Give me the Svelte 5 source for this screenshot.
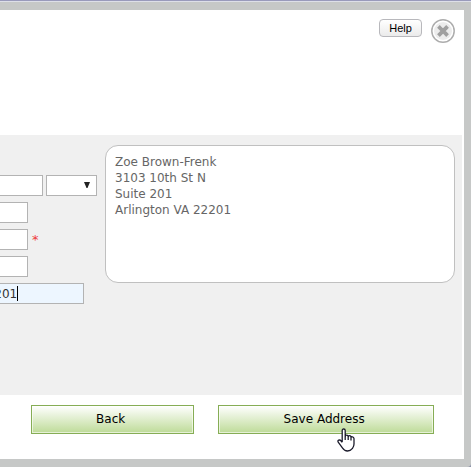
<script lang="ts">
	interface Line {
		id: string;
		label: string;
		value: string;
		required?: boolean;
		active?: boolean;
	}

	const lines: Line[] = [
		{ id: 'phone', label: 'Phone', value: '' },
		{ id: 'street', label: 'Street', value: '', required: true },
		{ id: 'suite', label: 'Suite', value: '' },
		{ id: 'zip', label: 'ZIP code', value: '22201', active: true }
	];

	const preview = ['Zoe Brown-Frenk', '3103 10th St N', 'Suite 201', 'Arlington VA 22201'];
</script>

<div class="frame">
	<main class="dialog">
		<header>
			<button type="button" class="help">Help</button>
			<button type="button" class="close" aria-label="Close">
				<svg width="24" height="24" viewBox="0 0 24 24" fill="none">
					<circle cx="12" cy="12" r="11.2" fill="#fff" stroke="#adadad" stroke-width="1.5" />
					<circle cx="12" cy="12" r="9" fill="#ececec" />
					<path d="M8.8 8.8l6.4 6.4M15.2 8.8l-6.4 6.4" stroke="#a0a0a0" stroke-width="3.8" stroke-linecap="square" />
				</svg>
			</button>
		</header>

		<section class="content">
			<div class="fields">
				<div class="line">
					<input class="name" type="text" aria-label="Name" />
					<div class="select">
						<select aria-label="Suffix">
							<option></option>
						</select>
						<svg width="6" height="6" viewBox="0 0 6 6"><path d="M0 0h6L3.5 6h-1z" fill="#222" /></svg>
					</div>
				</div>
				{#each lines as line}
					<div class="line">
						<input type="text" id={line.id} aria-label={line.label} class:active={line.active} value={line.value} />
						{#if line.active}
							<span class="caret"></span>
						{/if}
						{#if line.required}
							<span class="required">*</span>
						{/if}
					</div>
				{/each}
			</div>
			<address>
				{#each preview as row}
					<div>{row}</div>
				{/each}
			</address>
		</section>

		<footer>
			<button type="button" class="back">Back</button>
			<button type="button" class="save">
				Save Address
				<svg class="pointer" width="18" height="24" viewBox="0 0 18 24">
					<path
						d="M5.2 14V2.5Q5.2 1 6.7 1T8.2 2.5V9Q8.2 7.2 9.7 7.2T11.2 9Q11.2 7.6 12.6 7.6T14 9.5Q14 8.6 15.4 8.8T17 10.6V16Q17 18.4 15.5 20.3Q13.4 23 10.5 23Q7.4 23 5.6 20.2L1.2 14.2Q.4 12.8 1.7 12.2T4.2 13L5.2 14.4M8.2 8.5V12M11.2 9V12M14 9.5V12.5"
						fill="#fff"
						stroke="#1b1b2b"
						stroke-width="1.3"
						stroke-linejoin="round"
					/>
				</svg>
			</button>
		</footer>
	</main>
</div>

<style>
	:global(body) {
		background: #8d93a8;
	}

	.frame {
		font-family: Verdana, 'DejaVu Sans', sans-serif;
		font-size: 12px;
		line-height: 16px;
		padding: 8px 7px 8px 0;
		background: #c6c8c7;
		border-top: 1px solid #999abb;
		box-shadow: inset 0 1px #dddfe8;
		border-bottom-right-radius: 4px;
		overflow: hidden;
	}

	.dialog {
		background: #fff;
		margin-top: 1px;
		padding-right: 2px;
	}

	header {
		display: flex;
		justify-content: flex-end;
		align-items: flex-start;
		gap: 9px;
		height: 125px;
		padding: 9px 7px 0 0;
		box-sizing: border-box;
	}

	button {
		font: inherit;
		color: #000;
		padding: 0;
		cursor: pointer;
	}

	.help {
		width: 43px;
		height: 18px;
		font-family: 'Liberation Sans', Arial, sans-serif;
		font-size: 11px;
		line-height: 16px;
		border: 1px solid #b8b8bc;
		border-radius: 4px;
		background: linear-gradient(#fff, #ebebeb);
	}

	.close {
		width: 24px;
		height: 24px;
		border: 0;
		background: none;
	}

	.close svg {
		display: block;
	}

	.content {
		display: flex;
		gap: 8px;
		min-height: 260px;
		padding: 10px 7px 0 0;
		box-sizing: border-box;
		background: #f0f0f0;
	}

	.fields {
		flex: 0 0 97px;
		display: flex;
		flex-direction: column;
		gap: 6px;
		padding-top: 30px;
	}

	.line {
		position: relative;
		display: flex;
		align-items: center;
		height: 21px;
	}

	input,
	select {
		font: inherit;
		color: #333;
		height: 21px;
		border: 1px solid #b3b3b3;
		border-radius: 0;
		background: #fff;
		box-sizing: border-box;
	}

	input {
		width: 54px;
		flex: none;
		margin-left: -26px;
		padding: 0 4px;
	}

	.name {
		width: 69px;
	}

	.active {
		width: 110px;
		background: #edf6ff;
	}

	.caret {
		position: absolute;
		left: 17px;
		top: 3px;
		width: 1px;
		height: 15px;
		background: #000;
	}

	.select {
		position: relative;
		flex: 1;
		margin-left: 3px;
	}

	select {
		display: block;
		width: 100%;
		appearance: none;
	}

	.select svg {
		position: absolute;
		right: 7px;
		top: 7px;
		pointer-events: none;
	}

	.required {
		margin-left: 4px;
		font-size: 13px;
		color: #ee3a3a;
	}

	address {
		flex: 1;
		height: 138px;
		padding: 8px 9px;
		box-sizing: border-box;
		font-style: normal;
		color: #666;
		background: #fff;
		border: 1px solid #c0c0c0;
		border-radius: 13px;
	}

	footer {
		display: flex;
		gap: 24px;
		padding: 10px 28px 25px 31px;
	}

	footer button {
		position: relative;
		height: 29px;
		padding: 0 4px 2px 0;
		border: 1px solid #86ad55;
		background: linear-gradient(#fff, #bedb98);
		box-shadow: inset 0 0 0 1px rgba(255, 255, 255, 0.6);
	}

	.back {
		flex: 159;
	}

	.save {
		flex: 212;
	}

	.pointer {
		position: absolute;
		left: 118px;
		top: 22px;
	}
</style>
